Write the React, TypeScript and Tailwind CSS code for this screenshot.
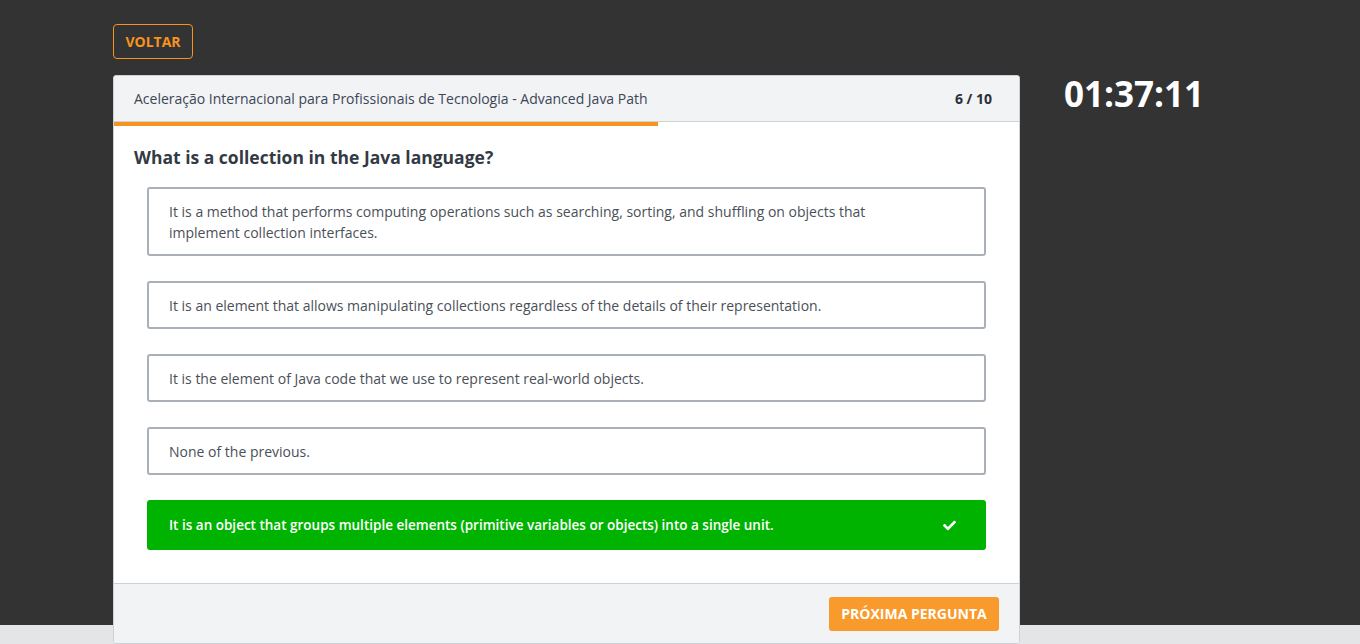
import { FaCheck } from "react-icons/fa";

const options = [
  "It is a method that performs computing operations such as searching, sorting, and shuffling on objects that implement collection interfaces.",
  "It is an element that allows manipulating collections regardless of the details of their representation.",
  "It is the element of Java code that we use to represent real-world objects.",
  "None of the previous.",
];

export default function App() {
  return (
    <div
      className="min-h-screen bg-[#e4e5e7]"
      style={{ fontFamily: '"Open Sans", "Noto Sans", sans-serif' }}
    >
      <div className="h-[625px] bg-[#333333] pl-[113px] pt-[24px]">
        <button className="h-[35px] w-[80px] rounded-[4px] border border-[#f7931e] text-[14px] font-bold text-[#f7931e]">
          VOLTAR
        </button>
        <div className="mt-[16px] flex items-start gap-[44px]">
          <div className="w-[907px] overflow-hidden rounded-[3px] border border-[#cdd1d6] bg-white">
            <div className="flex h-[46px] items-center justify-between border-b border-[#cdd1d6] bg-[#f2f3f5] pl-[20px] pr-[27px] text-[14px] text-[#3c4656]">
              <span>Aceleração Internacional para Profissionais de Tecnologia - Advanced Java Path</span>
              <span className="font-bold text-[#2b2f36]">6 / 10</span>
            </div>
            <div className="h-[4px] w-[544px] bg-[#f7941f]" />
            <div className="pb-[33px]">
              <h2 className="px-[20px] pt-[18px] text-[17.5px] font-bold text-[#333a44]">
                What is a collection in the Java language?
              </h2>
              <div className="mt-[17px] flex flex-col gap-[25px] px-[33px]">
                {options.map((o) => (
                  <div
                    key={o}
                    className="rounded-[3px] border-2 border-[#aab0b7] pb-[11px] pl-[20px] pr-[100px] pt-[12px] text-[14px] leading-[21px] text-[#4a5058]"
                  >
                    {o}
                  </div>
                ))}
                <div className="flex h-[50px] items-center justify-between rounded-[3px] bg-[#00b300] pl-[22px] pr-[30px] text-[13.5px] font-semibold text-white">
                  <span>It is an object that groups multiple elements (primitive variables or objects) into a single unit.</span>
                  <FaCheck className="h-[13px] w-[13px]" />
                </div>
              </div>
            </div>
            <div className="flex h-[60px] items-center justify-end border-t border-[#cdd1d6] bg-[#f2f3f5] pr-[20px]">
              <button className="h-[34px] w-[170px] rounded-[3px] bg-[#f99a2c] text-[14px] font-bold text-white">
                PRÓXIMA PERGUNTA
              </button>
            </div>
          </div>
          <div className="text-[35px] font-bold leading-[38px] text-white">01:37:11</div>
        </div>
      </div>
    </div>
  );
}
